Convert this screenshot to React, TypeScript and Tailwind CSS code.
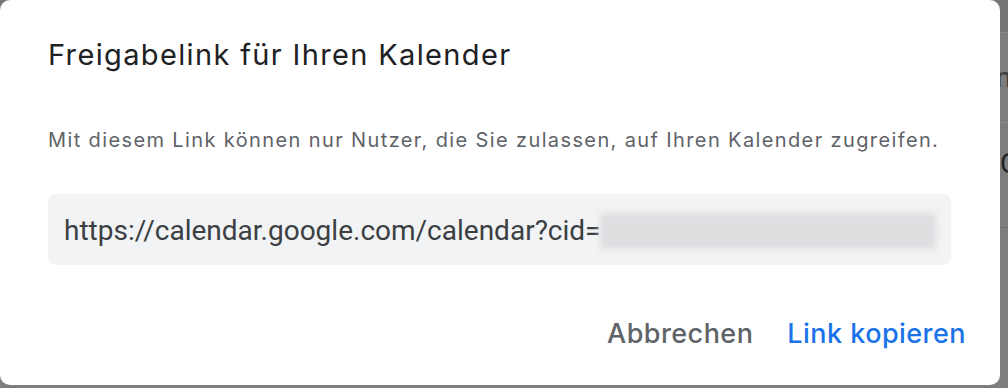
export default function App() {
  return (
    <div className="relative w-[1008px] h-[388px] overflow-hidden bg-[#7d7d7d]">
      {/* page behind the dialog (only a sliver shows on the right) */}
      <div className="flex flex-col">
        <div className="h-[33px] bg-[#767676] border-b border-[#8a8a8a]" />
        <div className="h-[90px] border-b border-[#8c8c8c] flex items-center text-[28px] text-[#3a3a3a] font-['Roboto',sans-serif]">
          <span className="pl-[996px]">ni</span>
        </div>
        <div className="h-[105px] border-b border-[#6c6c6c] flex items-start pt-[20px] text-[28px] text-[#222] font-['Roboto',sans-serif]">
          <span className="pl-[1000px]">C</span>
        </div>
      </div>

      {/* dialog */}
      <div className="absolute left-0 top-0 w-[1000px] h-[385px] bg-white rounded-[10px] flex flex-col px-[48px] font-['Inter',sans-serif]">
        <h2 className="mt-[37px] text-[29px] leading-[36px] text-[#202124] font-normal tracking-[1.35px]">
          Freigabelink für Ihren Kalender
        </h2>
        <p className="mt-[55px] text-[20px] leading-[24px] text-[#5f6368] tracking-[1.38px]">
          Mit diesem Link können nur Nutzer, die Sie zulassen, auf Ihren Kalender zugreifen.
        </p>
        <div className="mt-[42px] w-[903px] h-[71px] rounded-[8px] bg-[#f1f3f4] flex items-center pl-[16px] pr-[15px] pt-[2px]">
          <span className="text-[28px] text-[#3c4043] font-['Roboto',sans-serif] whitespace-nowrap">
            https://calendar.google.com/calendar?cid=
          </span>
          <div className="flex-1 h-[36px] bg-[#dddee0] blur-[3px]" />
        </div>
        <div className="mt-auto mb-[35px] -mr-[14px] flex justify-end gap-[34px] text-[27px] leading-[32px] font-medium tracking-[0.45px]">
          <button className="text-[#5f6368]">Abbrechen</button>
          <button className="text-[#1a73e8]">Link kopieren</button>
        </div>
      </div>
    </div>
  );
}
